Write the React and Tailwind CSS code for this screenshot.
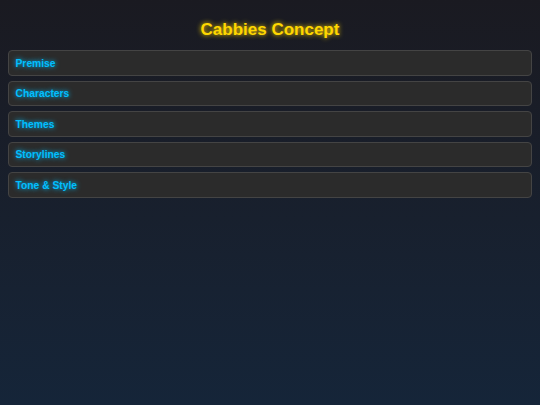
export default function App() {
  const items = ["Premise", "Characters", "Themes", "Storylines", "Tone & Style"];
  return (
    <div
      className="w-[540px] h-[405px] overflow-hidden bg-gradient-to-b from-[#1a1a21] to-[#152539] px-[8px]"
      style={{ fontFamily: '"Liberation Sans", Arial, sans-serif' }}
    >
      <h1 className="pt-[20px] h-[50px] text-center text-[17px] font-bold leading-[20px] text-[#ffd700] [text-shadow:0_0_5px_#ffd700]">
        Cabbies Concept
      </h1>
      <div className="flex flex-col gap-[5px]">
        {items.map((t) => (
          <div
            key={t}
            className="h-[25.5px] flex items-center pt-[1px] px-[6.5px] rounded-[4px] border border-[#444] bg-[#2b2b2b]"
          >
            <span className="text-[10.3px] font-bold text-[#00bfff] [text-shadow:0_0_5px_#00bfff]">{t}</span>
          </div>
        ))}
      </div>
    </div>
  );
}
